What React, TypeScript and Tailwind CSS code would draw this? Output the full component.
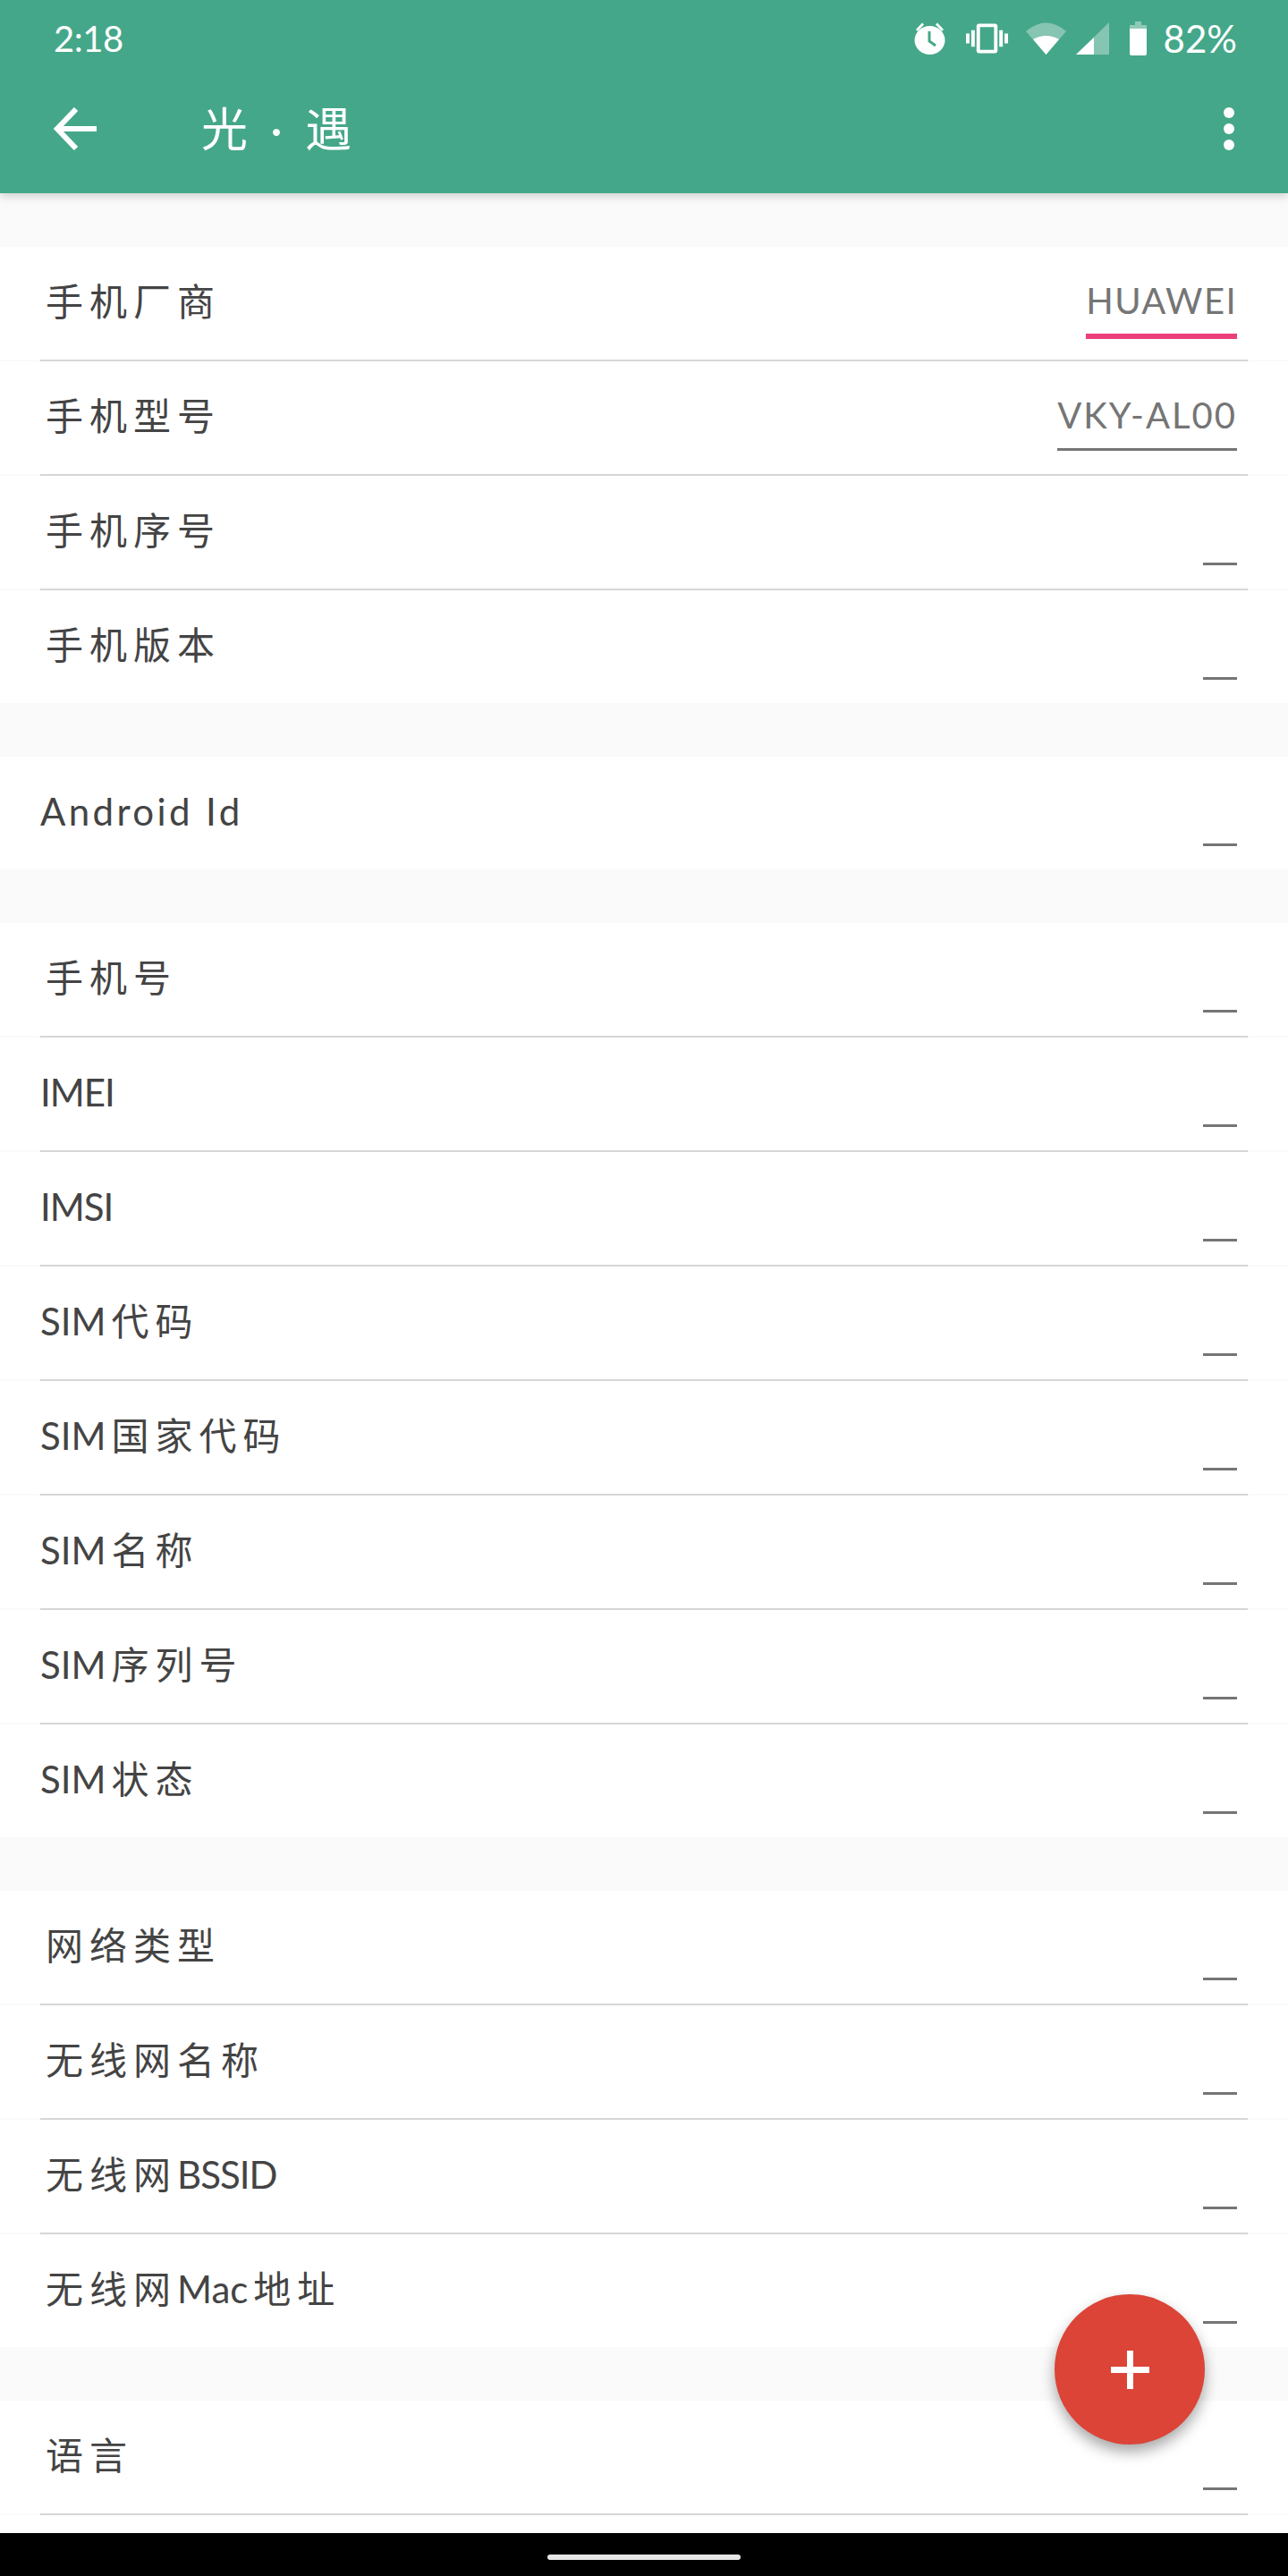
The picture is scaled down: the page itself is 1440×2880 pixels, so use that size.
const groups: { label: string; value?: string; focus?: boolean; latin?: string }[][] = [
  [
    { label: '手机厂商', value: 'HUAWEI', focus: true },
    { label: '手机型号', value: 'VKY-AL00' },
    { label: '手机序号' },
    { label: '手机版本' },
  ],
  [{ label: 'Android Id', latin: 'tracking-[3.4px]' }],
  [
    { label: '手机号' },
    { label: 'IMEI', latin: 'tracking-[-1px]' },
    { label: 'IMSI', latin: 'tracking-[-1px]' },
    { label: 'SIM代码' },
    { label: 'SIM国家代码' },
    { label: 'SIM名称' },
    { label: 'SIM序列号' },
    { label: 'SIM状态' },
  ],
  [
    { label: '网络类型' },
    { label: '无线网名称' },
    { label: '无线网BSSID', latin: 'tracking-[-1px]' },
    { label: '无线网Mac地址' },
  ],
  [{ label: '语言' }, { label: '' }],
];

const font = "font-['Lato','Noto_Sans_CJK_SC',sans-serif]";

// latin and chinese runs have different spacing in the original font
const Label = ({ text, latin }: { text: string; latin?: string }) => {
  const runs = text.match(/[\x00-\x7f]+|[^\x00-\x7f]+/g) ?? [];
  return (
    <span className="text-[42px] leading-[122px] text-[#444444]">
      {runs.map((run, i) =>
        /[\x00-\x7f]/.test(run) ? (
          <span key={i} className={latin}>
            {run}
          </span>
        ) : (
          <span key={i} className="pl-[6px] tracking-[7px]">
            {run}
          </span>
        ),
      )}
    </span>
  );
};

const Row = ({
  label,
  value,
  focus,
  latin,
  last,
}: {
  label: string;
  value?: string;
  focus?: boolean;
  latin?: string;
  last: boolean;
}) => (
  <div className="bg-white">
    <div className="flex h-[126px] justify-between pl-[45px] pr-[57px]">
      <Label text={label} latin={latin} />
      <div
        className={
          value
            ? focus
              ? 'h-[103px] border-b-[6px] border-[#ec407a] pt-[38px] text-[40px] leading-[44px] tracking-[1.4px] text-[#757575]'
              : 'h-[100px] border-b-[3px] border-[#757575] pt-[38px] text-[40px] leading-[44px] tracking-[2px] text-[#757575]'
            : 'h-[100px] w-[38px] border-b-[3px] border-[#757575]'
        }
      >
        {value}
      </div>
    </div>
    {!last && (
      <div className="h-[2px] bg-[#fafafa]">
        <div className="mx-[45px] h-full bg-[#d6d6d6]" />
      </div>
    )}
  </div>
);

const StatusIcons = () => (
  <div className="flex items-center text-white">
    <svg viewBox="0 0 37 37" className="h-[37px] w-[37px]">
      <path d="M3 9 L10 1.5 L12 3.5 L5 11Z M34 9 L27 1.5 L25 3.5 L32 11Z" fill="white" />
      <ellipse cx="18.5" cy="21" rx="17" ry="16" fill="white" />
      <path d="M18 11v11l7 5" fill="none" stroke="#45a789" strokeWidth="3" />
    </svg>
    <svg viewBox="0 0 24 24" preserveAspectRatio="none" className="ml-[22px] h-[44px] w-[47px]" fill="white">
      <path d="M0 15h2V9H0v6zm3 2h2V7H3v10zm19-8v6h2V9h-2zm-3 8h2V7h-2v10zM16.5 3h-9C6.67 3 6 3.67 6 4.5v15c0 .83.67 1.5 1.5 1.5h9c.83 0 1.5-.67 1.5-1.5v-15c0-.83-.67-1.5-1.5-1.5zM16 19H8V5h8v14z" />
    </svg>
    <svg viewBox="0 0 45 36" className="ml-[20px] h-[36px] w-[45px]">
      <path d="M0 10 Q22.5 -9 45 10 L22.5 36Z" fill="white" fillOpacity="0.35" />
      <path d="M8 19 Q22.5 11 37 19 L22.5 36Z" fill="white" />
    </svg>
    <svg viewBox="0 0 37 36" className="ml-[11px] h-[36px] w-[37px]">
      <path d="M37 0V36H0Z" fill="white" fillOpacity="0.35" />
      <path d="M20 17V36H0Z" fill="white" />
    </svg>
    <svg viewBox="0 0 19 38" className="ml-[23px] h-[38px] w-[19px]">
      <path d="M6 0h7v4h6v7H0V4h6Z" fill="white" fillOpacity="0.4" />
      <path d="M0 8h19v28a2 2 0 0 1-2 2H2a2 2 0 0 1-2-2Z" fill="white" />
    </svg>
    <span className="ml-[19px] text-[42px] leading-none">82%</span>
  </div>
);

export default function App() {
  return (
    <div className={`relative flex h-[2880px] flex-col overflow-hidden bg-[#fafafa] ${font}`}>
      <header className="relative z-10 h-[216px] bg-[#45a789] text-white shadow-[0_3px_10px_rgba(0,0,0,0.18)]">
        <div className="flex h-[84px] items-center justify-between pl-[60px] pr-[57px] pt-[1px]">
          <span className="text-[40px] leading-none tracking-[-0.5px]">2:18</span>
          <StatusIcons />
        </div>
        <div className="flex h-[120px] items-center justify-between pl-[60px] pr-[60px]">
          <div className="flex items-center">
            <svg viewBox="0 0 48 48" className="h-[48px] w-[48px]" fill="none" stroke="white" strokeWidth="6">
              <path d="M48 24H5M25 2L4 24l21 22" />
            </svg>
            <span className="ml-[117px] text-[52px] leading-none tracking-[6px]">光 · 遇</span>
          </div>
          <div className="flex flex-col gap-[6px]">
            <div className="h-[12px] w-[12px] rounded-full bg-white" />
            <div className="h-[12px] w-[12px] rounded-full bg-white" />
            <div className="h-[12px] w-[12px] rounded-full bg-white" />
          </div>
        </div>
      </header>

      <main className="flex-1 overflow-hidden">
        {groups.map((group, i) => (
          <section key={i} className="mt-[60px]">
            {group.map((row, j) => (
              <Row key={j} {...row} last={j === group.length - 1} />
            ))}
          </section>
        ))}
      </main>

      <nav className="relative z-10 flex h-[48px] items-start justify-center bg-black pt-[24px]">
        <div className="h-[6px] w-[216px] rounded-full bg-[#e6e6e6]" />
      </nav>

      <button className="absolute left-[1179px] top-[2565px] flex h-[168px] w-[168px] items-center justify-center rounded-full bg-[#db4437] shadow-[0_8px_16px_rgba(0,0,0,0.35)]">
        <svg viewBox="0 0 43 43" className="h-[43px] w-[43px]" fill="white">
          <path d="M18 0h7v18h18v7H25v18h-7V25H0v-7h18Z" />
        </svg>
      </button>
    </div>
  );
}
